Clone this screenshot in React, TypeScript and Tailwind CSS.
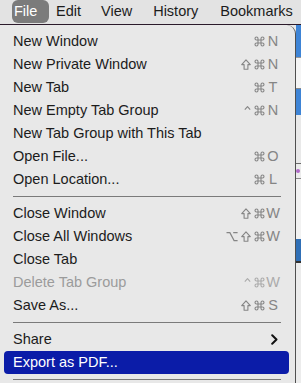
type Mod = "cmd" | "shift" | "opt" | "ctrl";

type Row =
  | { kind: "item"; label: string; mods?: Mod[]; key?: string; disabled?: boolean; sub?: boolean; active?: boolean }
  | { kind: "sep" };

const rows: Row[] = [
  { kind: "item", label: "New Window", mods: ["cmd"], key: "N" },
  { kind: "item", label: "New Private Window", mods: ["shift", "cmd"], key: "N" },
  { kind: "item", label: "New Tab", mods: ["cmd"], key: "T" },
  { kind: "item", label: "New Empty Tab Group", mods: ["ctrl", "cmd"], key: "N" },
  { kind: "item", label: "New Tab Group with This Tab" },
  { kind: "item", label: "Open File...", mods: ["cmd"], key: "O" },
  { kind: "item", label: "Open Location...", mods: ["cmd"], key: "L" },
  { kind: "sep" },
  { kind: "item", label: "Close Window", mods: ["shift", "cmd"], key: "W" },
  { kind: "item", label: "Close All Windows", mods: ["opt", "shift", "cmd"], key: "W" },
  { kind: "item", label: "Close Tab" },
  { kind: "item", label: "Delete Tab Group", mods: ["ctrl", "cmd"], key: "W", disabled: true },
  { kind: "item", label: "Save As...", mods: ["shift", "cmd"], key: "S" },
  { kind: "sep" },
  { kind: "item", label: "Share", sub: true },
  { kind: "item", label: "Export as PDF...", active: true },
  { kind: "sep" },
];

function ModIcon({ m }: { m: Mod }) {
  if (m === "cmd")
    return (
      <svg width="11" height="11" viewBox="0 0 11 11" fill="none" stroke="currentColor" strokeWidth="1.1">
        <path d="M4 2.5 A1.5 1.5 0 1 0 2.5 4 H8.5 A1.5 1.5 0 1 0 7 2.5 V8.5 A1.5 1.5 0 1 0 8.5 7 H2.5 A1.5 1.5 0 1 0 4 8.5 Z" />
      </svg>
    );
  if (m === "shift")
    return (
      <svg width="10" height="11" viewBox="0 0 10 11" fill="none" stroke="currentColor" strokeWidth="1.1" strokeLinejoin="round">
        <path d="M5 0.8 L9.3 5.6 H6.9 V10.2 H3.1 V5.6 H0.7 Z" />
      </svg>
    );
  if (m === "opt")
    return (
      <svg width="12" height="11" viewBox="0 0 12 11" fill="none" stroke="currentColor" strokeWidth="1.2">
        <path d="M0.5 1.6 H3.9 L8.1 9.6 H11.6 M7.2 1.6 H11.6" />
      </svg>
    );
  return (
    <svg width="7" height="11" viewBox="0 0 7 11" fill="none" stroke="currentColor" strokeWidth="1.1" strokeLinejoin="round">
      <path d="M0.8 4.6 L3.5 1.6 L6.2 4.6" />
    </svg>
  );
}

function Shortcut({ mods, k, disabled }: { mods: Mod[]; k: string; disabled?: boolean }) {
  return (
    <div className={`flex items-center ${disabled ? "text-[#ababab]" : "text-[#858585]"}`}>
      <div className="flex items-center justify-end gap-[3px]">
        {mods.map((m, i) => (
          <ModIcon key={i} m={m} />
        ))}
      </div>
      <span className="w-[16px] text-center">{k}</span>
    </div>
  );
}

export default function App() {
  return (
    <div className="h-[383px] w-[301px] overflow-hidden bg-[#e8e8e8] font-['Liberation_Sans',Arial,sans-serif] text-[14.5px] text-[#1c1c1c]">
      <div className="flex h-[25px] items-center border-b border-[#2b1a2b] bg-[#e3e3e3]">
        <div className="ml-[12px] flex h-[23px] w-[37px] items-center self-start rounded-[6px] bg-[#7b7b7b] pl-[2px] text-white">
          File
        </div>
        <span className="ml-[7px]">Edit</span>
        <span className="ml-[20px]">View</span>
        <span className="ml-[21px]">History</span>
        <span className="ml-[22px]">Bookmarks</span>
      </div>
      <div className="flex h-[358px]">
        <div className="w-[296px] shrink-0 rounded-tr-[9px] border-r border-[#4f4f4f] bg-[#e8e8e8] pt-[5px]">
          {rows.map((r, i) =>
            r.kind === "sep" ? (
              <div key={i} className="flex h-[11px] items-center pl-[13px] pr-[14px]">
                <div className="h-px w-full bg-[#7a7a7a]" />
              </div>
            ) : (
              <div
                key={i}
                className={`ml-[4px] mr-[6px] flex h-[23px] items-center justify-between rounded-[4px] pl-[9px] pr-[8px] ${
                  r.active ? "bg-[#0b1ca8] text-white" : r.disabled ? "text-[#9b9b9b]" : ""
                }`}
              >
                <span>{r.label}</span>
                {r.mods && r.key ? <Shortcut mods={r.mods} k={r.key} disabled={r.disabled} /> : null}
                {r.sub ? (
                  <svg width="7" height="11" viewBox="0 0 7 11" className="mr-[3px]">
                    <path d="M1.2 1.2 L5.5 5.5 L1.2 9.8" fill="none" stroke="#111" strokeWidth="2" strokeLinecap="round" strokeLinejoin="round" />
                  </svg>
                ) : null}
              </div>
            )
          )}
        </div>
        <div className="flex flex-1 flex-col">
          <div className="h-[32px] bg-[#3e84d6]" />
          <div className="h-px bg-[#9a9a9a]" />
          <div className="h-[30px] bg-[#f5f5f5]" />
          <div className="h-px bg-[#8a8a8a]" />
          <div className="h-[26px] bg-[#3e84d6]" />
          <div className="h-[48px] bg-[#e9e9e9]" />
          <div className="h-px bg-[#6a6a6a]" />
          <div className="flex h-[14px] items-center bg-[#ececec]">
            <div className="h-[4px] w-[4px] rounded-full bg-[#b06ac8]" />
          </div>
          <div className="h-px bg-[#8a8a8a]" />
          <div className="h-[60px] bg-[#f2f2f2]" />
          <div className="h-[22px] bg-[#2f6fb6]" />
          <div className="h-[2px] bg-[#333]" />
          <div className="flex-1 bg-[#ececec]" />
        </div>
      </div>
    </div>
  );
}
